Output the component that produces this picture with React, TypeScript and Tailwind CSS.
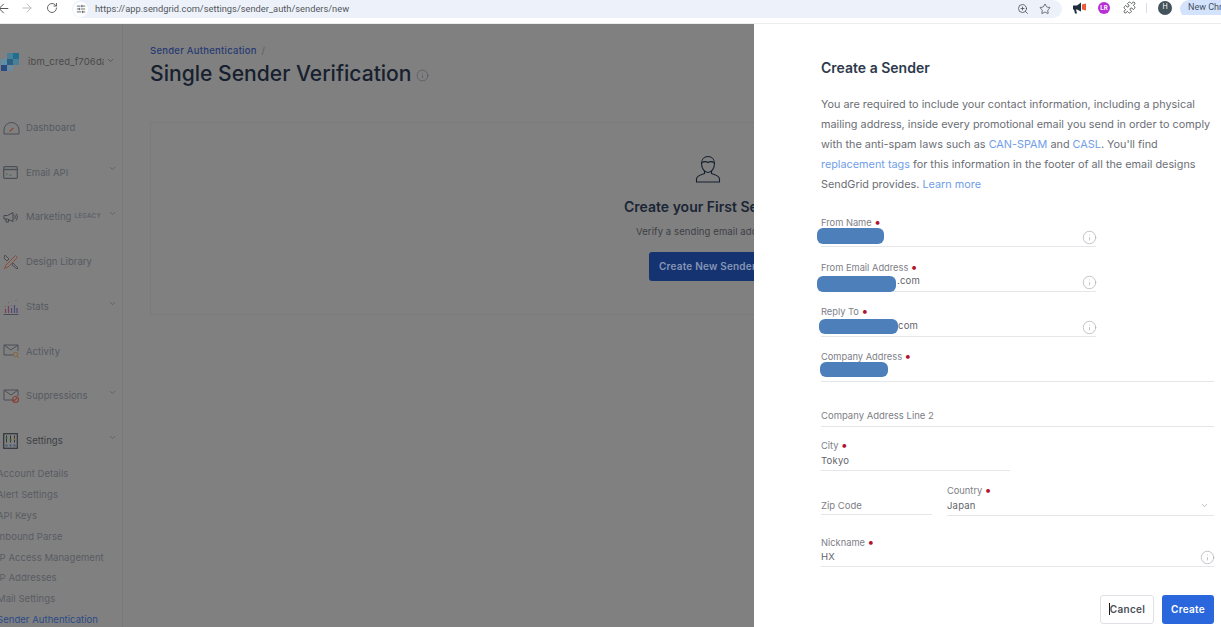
import React from 'react';
import { ArrowLeft, ArrowRight, RotateCw, SlidersHorizontal, ZoomIn, Star, Puzzle, ChevronDown, Info } from 'lucide-react';

const inter = { fontFamily: 'Inter, "Liberation Sans", sans-serif' };

const DashboardIcon = () => (
  <svg width="17" height="14" viewBox="0 0 17 14" fill="none">
    <path d="M1 13V9a7.5 7.5 0 0 1 15 0v4z" stroke="#4a4f57" strokeWidth="1" />
    <path d="M6.5 10.5 10.5 7" stroke="#8a4a3a" strokeWidth="1.2" />
  </svg>
);
const ApiIcon = () => (
  <svg width="15" height="13" viewBox="0 0 15 13" fill="none">
    <rect x="0.7" y="0.7" width="13.6" height="11.6" rx="1" stroke="#4a4f57" strokeWidth="1.2" />
    <path d="M1 3.5h13" stroke="#4a4f57" strokeWidth="1.4" />
    <path d="M3 7l1.5 1.2L3 9.4M6 9.2h3" stroke="#4d6a55" strokeWidth="0.8" />
  </svg>
);
const MarketingIcon = () => (
  <svg width="16" height="13" viewBox="0 0 16 13" fill="none" stroke="#43474e" strokeWidth="1">
    <path d="M1 4.5h3.5L10 1.5v9L4.5 8H1z" />
    <path d="M3 8v3h2.5V8.5" />
    <path d="M11.5 4c1 1 1 3 0 4M13 2.5c1.8 2 1.8 5 0 7" />
  </svg>
);
const DesignIcon = () => (
  <svg width="16" height="16" viewBox="0 0 16 16" fill="none" strokeWidth="1">
    <path d="M2 1l4 4-2 2-3-3zM10 9l5 5-1 1-5-4z" stroke="#4a4f57" />
    <path d="M12.5 1.5l2 2L5 13l-3.5 1.5L3 11z" stroke="#8a4f3a" />
  </svg>
);
const StatsIcon = () => (
  <svg width="16" height="16" viewBox="0 0 16 16" fill="none">
    <path d="M0.5 15.5h15" stroke="#4a4f57" />
    <path d="M2.5 14V10" stroke="#7a3d5a" strokeWidth="1.2" />
    <path d="M5.5 14V7" stroke="#7a3d5a" strokeWidth="1.2" />
    <path d="M8.5 14V9" stroke="#4a4a78" strokeWidth="1.2" />
    <path d="M11.5 14V6" stroke="#4a4a78" strokeWidth="1.2" />
    <path d="M14 14V9" stroke="#5a3f7a" strokeWidth="1.2" />
    <path d="M2.5 7.5v.5M5.5 3.5V4M8.5 6v.5M13 1v.5" stroke="#444" strokeWidth="1" />
  </svg>
);
const MailIcon = ({ mark }: { mark: 'search' | 'block' }) => (
  <svg width="17" height="15" viewBox="0 0 17 15" fill="none">
    <path d="M11 11H1V1h14v6" stroke="#4a4f57" />
    <path d="M1 1l7 5 7-5" stroke="#4a4f57" />
    {mark === 'search' ? (
      <g stroke="#86653a" strokeWidth="1">
        <circle cx="12.5" cy="10.5" r="2.2" />
        <path d="M14.2 12.2 16 14" />
      </g>
    ) : (
      <g stroke="#8a4238" strokeWidth="1.2">
        <circle cx="12.5" cy="10.5" r="3" />
        <path d="M10.5 12.5l4-4" />
      </g>
    )}
  </svg>
);
const SettingsIcon = () => (
  <svg width="15" height="16" viewBox="0 0 15 16" fill="none">
    <rect x="0.7" y="0.7" width="13.6" height="14.6" stroke="#31353a" strokeWidth="1.2" />
    <path d="M3.5 2.5v7M7.5 2.5v7M11.5 2.5v7" stroke="#31353a" />
    <path d="M2.5 5h2M6.5 7h2" stroke="#3c6a3c" strokeWidth="1.4" />
    <path d="M10.5 6h2" stroke="#8a7a3a" strokeWidth="1.4" />
    <path d="M2.5 12.5h2M6.5 12.5h2M10.5 12.5h2" stroke="#3f5a7a" strokeWidth="2" />
  </svg>
);

const navItems: { label: string; icon: React.ReactNode; chevron?: boolean; legacy?: boolean; active?: boolean }[] = [
  { label: 'Dashboard', icon: <DashboardIcon /> },
  { label: 'Email API', icon: <ApiIcon />, chevron: true },
  { label: 'Marketing', icon: <MarketingIcon />, chevron: true, legacy: true },
  { label: 'Design Library', icon: <DesignIcon /> },
  { label: 'Stats', icon: <StatsIcon />, chevron: true },
  { label: 'Activity', icon: <MailIcon mark="search" /> },
  { label: 'Suppressions', icon: <MailIcon mark="block" />, chevron: true },
  { label: 'Settings', icon: <SettingsIcon />, chevron: true, active: true },
];

const subItems = ['Account Details', 'Alert Settings', 'API Keys', 'Inbound Parse', 'IP Access Management', 'IP Addresses', 'Mail Settings', 'Sender Authentication'];

const Blob = ({ className }: { className: string }) => (
  <span className={`absolute bg-[#4d7fbb] rounded-[6px] ${className}`} />
);

const Field = ({ label, value, required, info, raise, className, children }: {
  label: string; value?: string; required?: boolean; info?: boolean; raise?: boolean; className: string; children?: React.ReactNode;
}) => (
  <div className={`relative border-b border-[#e4e6ea] shrink-0 ${className}`}>
    <div className={`text-[9.3px] leading-[12px] text-[#7d8087] ${raise ? '-mt-[1px] mb-[2px]' : ''}`}>
      {label}
      {required && <span className="text-[#b3122f] text-[12px] leading-[12px] ml-[3px] font-bold">•</span>}
    </div>
    <div className="text-[9.5px] leading-[14px] mt-[1px] text-[#5f636b] tracking-[0.2px]">{value ?? '\u00a0'}</div>
    {info && <Info size={15} strokeWidth={1} className="absolute right-[-1px] top-[14px] text-[#a0a3a8]" />}
    {children}
  </div>
);

export default function App() {
  return (
    <div className="w-[1221px] h-[627px] overflow-hidden flex flex-col bg-white" style={inter}>
      {/* browser toolbar */}
      <div className="h-[24px] shrink-0 flex items-start bg-white border-b border-[#ececec]">
        <div className="w-[72px] h-[16px] shrink-0 flex items-center text-[#53565b]">
          <ArrowLeft size={15} strokeWidth={1.6} className="-ml-[4px]" />
          <ArrowRight size={14} strokeWidth={1.6} className="ml-[9px] text-[#b4b6b9]" />
          <RotateCw size={12} strokeWidth={1.8} className="ml-[12px]" />
        </div>
        <div className="w-[990px] h-[18px] shrink-0 rounded-[14px] bg-[#edf2fa] flex items-center">
          <span className="ml-[1px] w-[15px] h-[15px] rounded-full bg-white flex items-center justify-center">
            <SlidersHorizontal size={10} strokeWidth={1.8} className="text-[#3c4043]" />
          </span>
          <span className="ml-[7px] text-[9.3px] text-[#54575c]" style={{ fontFamily: 'Roboto, sans-serif' }}>
            https://app.sendgrid.com/settings/sender_auth/senders/new
          </span>
          <ZoomIn size={12} strokeWidth={1.6} className="ml-auto text-[#4a4d52]" />
          <Star size={12} strokeWidth={1.6} className="ml-[10px] mr-[11px] text-[#4a4d52]" />
        </div>
        <div className="flex items-center h-[15px] flex-1 min-w-0 overflow-hidden">
          <svg width="13" height="12" viewBox="0 0 13 11" className="ml-[11px] shrink-0">
            <path d="M0 3h4l4-3v9L4 7H3l1 4H2L1 7H0z" fill="#1f2d3d" />
            <path d="M9 2l4-1v7L9 7z" fill="#f0593a" />
          </svg>
          <span className="ml-[12px] w-[12px] h-[12px] shrink-0 rounded-full bg-[#b92fd6] text-white text-[6px] font-bold flex items-center justify-center">LR</span>
          <Puzzle size={13} strokeWidth={1.5} className="ml-[13px] shrink-0 text-[#3c4043]" />
          <span className="ml-[10px] w-[1px] h-[10px] shrink-0 bg-[#d5dff0]" />
          <span className="ml-[11px] w-[14px] h-[14px] shrink-0 rounded-full bg-[#44525c] text-white text-[7px] flex items-center justify-center">H</span>
          <span className="ml-[8px] w-[60px] h-[18px] self-start shrink-0 rounded-l-[10px] bg-[#d3e3fd] text-[9px] text-[#44505f] pl-[8px] leading-[15px] whitespace-nowrap" style={{ fontFamily: 'Roboto, sans-serif' }}>New Chrome</span>
        </div>
      </div>

      <div className="flex-1 flex min-h-0 bg-[#808080]">
        {/* sidebar */}
        <aside className="w-[123px] shrink-0 border-r border-[#797979] flex flex-col">
          <div className="flex items-center h-[20px] mt-[29px] relative">
            <svg width="19" height="19" viewBox="0 0 19 19" className="ml-[1px] shrink-0">
              <rect x="6" y="6" width="6" height="6" fill="#2f5f80" />
              <rect x="12" y="0" width="6" height="6" fill="#1f6f8f" />
              <rect x="6" y="0" width="6" height="6" fill="#4a7f9a" />
              <rect x="12" y="6" width="6" height="6" fill="#4a7f9a" />
              <rect x="0" y="6" width="6" height="6" fill="#5f8fa8" />
              <rect x="0" y="12" width="6" height="6" fill="#2b4a80" />
              <rect x="6" y="12" width="6" height="6" fill="#6a8aa0" />
            </svg>
            <span className="ml-[8px] w-[76px] overflow-hidden whitespace-nowrap text-[9.5px] text-[#4a4a4a] tracking-[0.15px]">ibm_cred_f706dac</span>
            <ChevronDown size={9} strokeWidth={2} className="ml-[2px] -mt-[4px] text-[#4a4a4a]" />
          </div>
          <nav className="mt-[33.5px] flex flex-col">
            {navItems.map(item => (
              <div key={item.label} className="h-[44.75px] shrink-0 flex items-center relative">
                <span className="w-[26px] pl-[3px] flex justify-start shrink-0">{item.icon}</span>
                <span className={`text-[9.5px] tracking-[0.05px] ${item.active ? 'text-[#3c3f44]' : 'text-[#555a60]'}`}>{item.label}</span>
                {item.legacy && <span className="ml-[3px] -mt-[4px] text-[6px] font-semibold tracking-[0.4px] text-[#5d6066]">LEGACY</span>}
                {item.chevron && <ChevronDown size={9} strokeWidth={2} className="absolute left-[108px] top-[14px] text-[#555a60]" />}
              </div>
            ))}
          </nav>
          <div className="-ml-[3px] mt-[0.5px] whitespace-nowrap">
            {subItems.map((s, i) => (
              <div key={s} className={`h-[20.9px] leading-[20.9px] text-[9.5px] tracking-[0.05px] ${i === 7 ? 'text-[#2b4a86]' : 'text-[#595c62]'}`}>{s}</div>
            ))}
          </div>
        </aside>

        {/* page behind the overlay */}
        <main className="w-[631px] shrink-0 overflow-hidden pl-[27px]">
          <div className="mt-[20px] text-[9.5px] leading-[13px] font-medium tracking-[0.25px] text-[#273a72]">
            Sender Authentication <span className="ml-[2px] font-normal text-[#5c5c5c]">/</span>
          </div>
          <div className="flex items-center">
            <h1 className="text-[21.1px] leading-[34px] font-medium text-[#17202e]">Single Sender Verification</h1>
            <Info size={13} strokeWidth={1} className="ml-[4px] mt-[3px] text-[#44484e]" />
          </div>
          <div className="mt-[31px] w-[700px] h-[193px] border border-[#7a7a7a] rounded-[2px] pl-[473px]">
            <svg width="28" height="28" viewBox="0 0 28 28" fill="none" stroke="#15202e" strokeWidth="1.1" className="ml-[70px] mt-[32px]">
              <path d="M7.5 8.5C7.5 4 10.5 1.5 14 1.5s6.5 2.5 6.5 7c0 5-3 9-6.5 9s-6.5-4-6.5-9z" />
              <path d="M7.5 8c2-1.5 4-2 6.5-.5C16.5 6 18.5 6.5 20.5 8" />
              <path d="M10.5 16v2.5c-3 1-8 2-8 5.5v3h23v-3c0-3.5-5-4.5-8-5.5V16" />
            </svg>
            <div className="mt-[13px] text-[14px] leading-[22px] font-semibold text-[#1a2536] whitespace-nowrap">Create your First Sender</div>
            <div className="mt-[7px] pl-[12px] text-[9.5px] leading-[14px] text-[#3c3f44] whitespace-nowrap tracking-[0.1px]">Verify a sending email address</div>
            <div className="mt-[13px] pl-[25px]">
              <div className="w-[150px] h-[29px] rounded-[3px] bg-[#153370] pl-[10px] text-[10px] leading-[28px] font-semibold text-[#8595b5] whitespace-nowrap tracking-[0.2px]">Create New Sender</div>
            </div>
          </div>
        </main>

        {/* slide-over panel */}
        <section className="flex-1 bg-white pl-[67px] pr-[7px] min-w-0 relative">
          <h2 className="mt-[35px] text-[14px] leading-[18px] font-semibold text-[#2d3a4b]">Create a Sender</h2>
          <p className="mt-[17px] w-[393px] text-[10.85px] leading-[20.1px] text-[#6b6e75]">
            You are required to include your contact information, including a physical mailing address, inside every promotional email you send in order to comply with the anti-spam laws such as <span className="text-[#6f9ee8]">CAN-SPAM</span> and <span className="text-[#6f9ee8]">CASL</span>. You'll find <span className="text-[#6f9ee8]">replacement tags</span> for this information in the footer of all the email designs SendGrid provides. <span className="text-[#6f9ee8]">Learn more</span>
          </p>
          <div className="mt-[22px] flex flex-col">
            <Field label="From Name" required info className="w-[275px] h-[31px]">
              <Blob className="-left-[4px] top-[12px] w-[67px] h-[16px]" />
            </Field>
            <Field label="From Email Address" required info className="w-[275px] h-[31px] mt-[14px]">
              <span className="absolute left-[76px] top-[13px] text-[9.5px] leading-[14px] text-[#5f636b] tracking-[0.2px]">.com</span>
              <Blob className="-left-[4px] top-[15px] w-[79px] h-[16px]" />
            </Field>
            <Field label="Reply To" required info raise className="w-[275px] h-[31px] mt-[14px]">
              <span className="absolute left-[77px] top-[13px] text-[9.5px] leading-[14px] text-[#5f636b] tracking-[0.2px]">com</span>
              <Blob className="-left-[2px] top-[13px] w-[79px] h-[15px]" />
            </Field>
            <Field label="Company Address" required raise className="w-full h-[31px] mt-[14px]">
              <Blob className="-left-[1px] top-[11px] w-[68px] h-[15px]" />
            </Field>
            <div className="w-full mt-[14px] h-[31px] border-b border-[#e4e6ea] flex items-end pb-[3px] text-[9.5px] leading-[14px] text-[#7d8087]">Company Address Line 2</div>
            <Field label="City" required raise value="Tokyo" className="w-[189px] h-[31px] mt-[13px]" />
            <div className="flex mt-[14px]">
              <div className="w-[111px] h-[30px] border-b border-[#e4e6ea] flex items-end pb-[1px] text-[9.5px] leading-[14px] text-[#7d8087]">Zip Code</div>
              <Field label="Country" required raise value="Japan" className="ml-[15px] flex-1 h-[31px]">
                <ChevronDown size={9} strokeWidth={1.5} className="absolute right-[5px] top-[16px] text-[#8a8d93]" />
              </Field>
            </div>
            <Field label="Nickname" required value="HX" info className="w-full h-[31px] mt-[20px]" />
          </div>
          <div className="absolute right-[7px] bottom-[3px] flex gap-[8px]">
            <div className="w-[54px] h-[29px] rounded-[3px] border border-[#dfe1e6] bg-white text-center text-[10px] leading-[27px] font-semibold text-[#4b4f57] tracking-[0.3px]">
              <span className="border-l border-[#1a1a1a]">Cancel</span>
            </div>
            <div className="w-[52px] h-[29px] rounded-[3px] bg-[#2a67dd] text-center text-[10px] leading-[28px] font-semibold text-white tracking-[0.3px]">Create</div>
          </div>
        </section>
      </div>
    </div>
  );
}
